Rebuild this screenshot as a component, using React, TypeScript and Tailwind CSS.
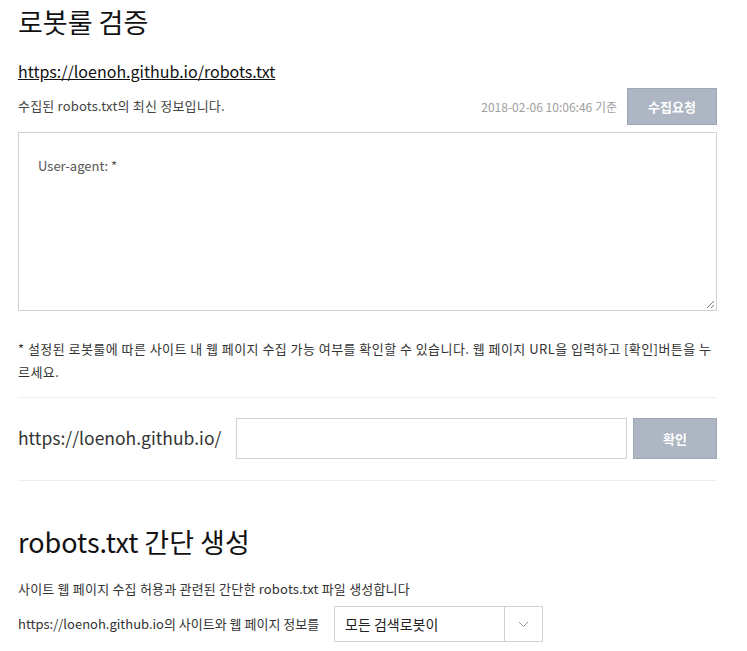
import React from "react";

const font = { fontFamily: '"Noto Sans CJK KR", "Noto Sans", sans-serif' };

export default function App() {
  return (
    <div className="bg-white w-[747px] h-[651px] overflow-hidden text-[#333]" style={font}>
      <div className="pl-[18px] pr-[30px]">
        <h1 className="text-[27px] leading-[34px] pt-[5px] text-[#111] font-normal">로봇룰 검증</h1>
        <div className="mt-[22px] text-[16px] leading-[20px]">
          <a className="underline text-[#111]">https://loenoh.github.io/robots.txt</a>
        </div>
        <div className="flex items-end justify-between mt-[7px]">
          <span className="text-[13px] leading-[16px] pb-[11px] text-[#444] tracking-[0.2px]">수집된 robots.txt의 최신 정보입니다.</span>
          <div className="flex items-center">
            <span className="text-[12px] text-[#a0a0a0] mr-[10px]">2018-02-06 10:06:46 기준</span>
            <button className="w-[90px] h-[37px] bg-[#adb6c2] border border-[#9fa8b5] text-white text-[13px] font-bold">수집요청</button>
          </div>
        </div>
        <div className="mt-[7px] h-[179px] border border-[#cdd1d8] relative">
          <div className="pl-[19px] pt-[23px] text-[13px] text-[#555]">User-agent: *</div>
          <svg className="absolute right-[1px] bottom-[1px]" width="9" height="9" viewBox="0 0 9 9">
            <line x1="8" y1="1" x2="1" y2="8" stroke="#777" strokeWidth="1" />
            <line x1="8" y1="5" x2="5" y2="8" stroke="#777" strokeWidth="1" />
          </svg>
        </div>
        <p className="mt-[26px] text-[13px] leading-[23px] text-[#333] tracking-[0.45px] break-all">
          * 설정된 로봇룰에 따른 사이트 내 웹 페이지 수집 가능 여부를 확인할 수 있습니다. 웹 페이지 URL을 입력하고 [확인]버튼을 누르세요.
        </p>
        <div className="mt-[14px] border-t border-[#eeeeee]" />
        <div className="flex items-center h-[41px] mt-[20px]">
          <span className="text-[17.5px] text-[#333] w-[218px]">https://loenoh.github.io/</span>
          <input className="h-[41px] w-[391px] border border-[#cdd1d8] outline-none" />
          <button className="ml-[6px] h-[41px] w-[84px] bg-[#adb6c2] border border-[#9fa8b5] text-white text-[13px] font-bold">확인</button>
        </div>
        <div className="mt-[21px] border-t border-[#eeeeee]" />
        <h2 className="mt-[44px] text-[27px] leading-[34px] text-[#111] font-normal">robots.txt 간단 생성</h2>
        <div className="mt-[22px] text-[13px] leading-[16px] text-[#333] tracking-[0.2px]">사이트 웹 페이지 수집 허용과 관련된 간단한 robots.txt 파일 생성합니다</div>
        <div className="flex items-center mt-[9px]">
          <span className="text-[13px] text-[#333] w-[316px]">https://loenoh.github.io의 사이트와 웹 페이지 정보를</span>
          <div className="flex h-[36px] w-[209px] border border-[#cdd1d8]">
            <div className="flex-1 flex items-center pl-[10px] text-[14px] text-[#222]">모든 검색로봇이</div>
            <div className="w-[38px] border-l border-[#cdd1d8] flex items-center justify-center">
              <svg width="11" height="7" viewBox="0 0 11 7">
                <polyline points="1,1 5.5,5.5 10,1" fill="none" stroke="#999" strokeWidth="1" />
              </svg>
            </div>
          </div>
        </div>
      </div>
    </div>
  );
}
